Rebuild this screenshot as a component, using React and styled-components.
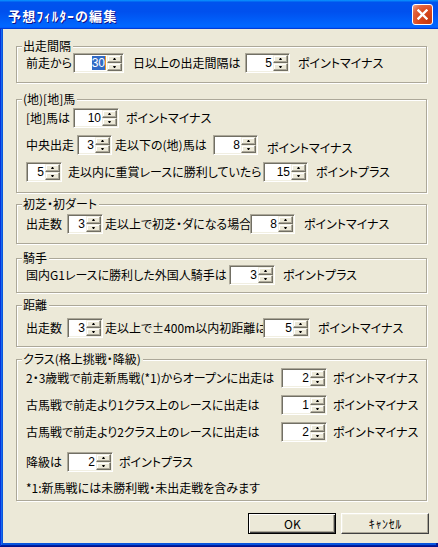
import React from 'react';
import styled, { createGlobalStyle } from 'styled-components';

const GlobalStyle = createGlobalStyle`
  html, body { margin: 0; padding: 0; background: #fff; }
  body { font-family: "Noto Sans CJK JP", "Noto Sans", sans-serif; }
`;

const Window = styled.div`
  width: 438px;
  height: 547px;
  display: flex;
  flex-direction: column;
`;

const TitleBar = styled.div`
  height: 29px;
  flex: none;
  display: flex;
  align-items: center;
  justify-content: space-between;
  padding: 0 5px 0 8px;
  box-sizing: border-box;
  background: linear-gradient(180deg, #0997ff, #0053ee 8%, #0050ee 40%, #06f 88%, #06f 93%, #005bff 95%, #003dd7 96%, #003dd7);
`;

const Title = styled.span`
  color: #fff;
  font-size: 13px;
  font-weight: bold;
  letter-spacing: 1.2px;
  text-shadow: 1px 1px #0f1089;
  padding-top: 1px;
`;

const CloseButton = styled.div`
  width: 21px;
  height: 21px;
  box-sizing: border-box;
  border: 1px solid #fff;
  border-radius: 3px;
  display: flex;
  align-items: center;
  justify-content: center;
  background: radial-gradient(circle at 85% 85%, #c43a12 0%, #d9471c 45%, #e2643e 75%, #f3a88f 100%);
`;

const Frame = styled.div`
  flex: 1;
  display: flex;
  padding: 0 3px 4px;
  background: #0855dd;
  box-shadow: inset -1px -1px #00138c, inset 1px 0 #0831d9, inset -2px -2px #001ea0, inset 2px 0 #166aee;
`;

const Client = styled.div`
  flex: 1;
  background: #ece9d8;
  padding: 17px 13px 0;
  display: flex;
  flex-direction: column;
  color: #000;
  font-size: 12px;
`;

const Group = styled.div`
  position: relative;
  margin-top: ${p => p.$mt || 0}px;
  padding: ${p => p.$pt}px 8px ${p => p.$pb}px 9px;
  border: 1px solid #aca899;
  box-shadow: 1px 1px 0 #fff, inset 1px 1px 0 #fff;
`;

const Legend = styled.span`
  position: absolute;
  top: -8px;
  left: 5px;
  padding: 0 2px 0 1px;
  line-height: 14px;
  background: #ece9d8;
  white-space: nowrap;
  font-feature-settings: "palt";
`;

const Row = styled.div`
  display: flex;
  align-items: center;
  height: 20px;
  margin-top: ${p => p.$gap || 0}px;
`;

const Text = styled.span`
  flex: none;
  width: ${p => (p.$w ? `${p.$w}px` : 'auto')};
  margin-left: ${p => p.$ml || 0}px;
  padding-top: ${p => (p.$low ? 5 : 0)}px;
  line-height: 14px;
  white-space: nowrap;
  font-feature-settings: "palt";
`;

const Note = styled.div`
  margin-top: 9px;
  line-height: 14px;
  white-space: nowrap;
  font-feature-settings: "palt";
`;

const SpinBox = styled.div`
  flex: none;
  width: ${p => p.$w}px;
  height: 20px;
  box-sizing: border-box;
  display: flex;
  padding: 1px;
  background: #fff;
  border: 1px solid;
  border-color: #aca899 #fff #fff #aca899;
  box-shadow: inset 1px 1px #716f64, inset -1px -1px #f1efe2;
`;

const SpinValue = styled.div`
  flex: 1;
  display: flex;
  justify-content: flex-end;
  align-items: center;
  padding-right: 1px;
  font-family: "Liberation Sans", "Noto Sans", sans-serif;
  font-size: 12px;
`;

const Selected = styled.span`
  background: #316ac5;
  color: #fff;
  line-height: 14px;
  border-right: 1px solid #e89a2c;
`;

const SpinButtons = styled.div`
  width: 15px;
  display: flex;
  flex-direction: column;
`;

const SpinButton = styled.div`
  flex: 1;
  display: flex;
  align-items: center;
  justify-content: center;
  background: #ece9d8;
  border: 1px solid;
  border-color: #f1efe2 #716f64 #716f64 #f1efe2;
  box-shadow: inset -1px -1px #aca899, inset 1px 1px #fff;
  &::after {
    content: "";
    width: 1px;
    border-left: 1px solid transparent;
    border-right: 1px solid transparent;
    ${p => (p.$down ? 'border-top: 2px solid #000;' : 'border-bottom: 2px solid #000;')}
  }
`;

const ButtonRow = styled.div`
  display: flex;
  justify-content: flex-end;
  gap: 5px;
  margin: 12px -2px 0 0;
`;

const PushButton = styled.button`
  width: 88px;
  height: 21px;
  padding: 0;
  font-family: "Noto Sans CJK JP", "Noto Sans", sans-serif;
  font-size: 12px;
  letter-spacing: ${p => (p.$wide ? '0.6px' : '0')};
  color: #000;
  background: #ece9d8;
  border: 1px solid;
  border-color: ${p => (p.$default ? '#000' : '#fff #404040 #404040 #fff')};
  box-shadow: ${p =>
    p.$default
      ? 'inset 1px 1px #fff, inset -1px -1px #404040, inset -2px -2px #aca899'
      : 'inset -1px -1px #aca899, inset 1px 1px #f1efe2'};
`;

const Spinner = ({ w, value, selected }) => (
  <SpinBox $w={w}>
    <SpinValue>{selected ? <Selected>{value}</Selected> : value}</SpinValue>
    <SpinButtons>
      <SpinButton />
      <SpinButton $down />
    </SpinButtons>
  </SpinBox>
);

const CloseIcon = () => (
  <svg width="11" height="11" viewBox="0 0 11 11">
    <path d="M1.5 1.5 L9.5 9.5 M9.5 1.5 L1.5 9.5" stroke="#fff" strokeWidth="2.4" strokeLinecap="square" />
  </svg>
);

export default function App() {
  return (
    <Window>
      <GlobalStyle />
      <TitleBar>
        <Title>予想ﾌｨﾙﾀｰの編集</Title>
        <CloseButton><CloseIcon /></CloseButton>
      </TitleBar>
      <Frame>
        <Client>
          <Group $pt={6} $pb={9}>
            <Legend>出走間隔</Legend>
            <Row>
              <Text $w={47}>前走から</Text>
              <Spinner w={51} value="30" selected />
              <Text $ml={9} $w={112}>日以上の出走間隔は</Text>
              <Spinner w={45} value="5" />
              <Text $ml={8}>ポイントマイナス</Text>
            </Row>
          </Group>

          <Group $mt={16} $pt={8} $pb={10}>
            <Legend>(地)[地]馬</Legend>
            <Row>
              <Text $w={47}>[地]馬は</Text>
              <Spinner w={46} value="10" />
              <Text $ml={7}>ポイントマイナス</Text>
            </Row>
            <Row $gap={7}>
              <Text $w={51}>中央出走</Text>
              <Spinner w={35} value="3" />
              <Text $ml={3} $w={98}>走以下の(地)馬は</Text>
              <Spinner w={45} value="8" />
              <Text $ml={9} $low>ポイントマイナス</Text>
            </Row>
            <Row $gap={7}>
              <Spinner w={36} value="5" />
              <Text $ml={6} $w={195}>走以内に重賞レースに勝利していたら</Text>
              <Spinner w={45} value="15" />
              <Text $ml={8}>ポイントプラス</Text>
            </Row>
          </Group>

          <Group $mt={11} $pt={9} $pb={9}>
            <Legend>初芝・初ダート</Legend>
            <Row>
              <Text $w={41}>出走数</Text>
              <Spinner w={36} value="3" />
              <Text $ml={2} $w={145}>走以上で初芝・ダになる場合</Text>
              <Spinner w={45} value="8" />
              <Text $ml={9}>ポイントマイナス</Text>
            </Row>
          </Group>

          <Group $mt={14} $pt={6} $pb={7}>
            <Legend>騎手</Legend>
            <Row>
              <Text $w={203}>国内G1レースに勝利した外国人騎手は</Text>
              <Spinner w={46} value="3" />
              <Text $ml={8}>ポイントプラス</Text>
            </Row>
          </Group>

          <Group $mt={12} $pt={12} $pb={8}>
            <Legend>距離</Legend>
            <Row>
              <Text $w={41}>出走数</Text>
              <Spinner w={36} value="3" />
              <Text $ml={2} $w={158}>走以上で±400m以内初距離は</Text>
              <Spinner w={47} value="5" />
              <Text $ml={8}>ポイントマイナス</Text>
            </Row>
          </Group>

          <Group $mt={12} $pt={8} $pb={5}>
            <Legend>クラス(格上挑戦・降級)</Legend>
            <Row>
              <Text $w={255}>2・3歳戦で前走新馬戦(*1)からオープンに出走は</Text>
              <Spinner w={46} value="2" />
              <Text $ml={6}>ポイントマイナス</Text>
            </Row>
            <Row $gap={7}>
              <Text $w={255}>古馬戦で前走より1クラス上のレースに出走は</Text>
              <Spinner w={46} value="1" />
              <Text $ml={6}>ポイントマイナス</Text>
            </Row>
            <Row $gap={7}>
              <Text $w={255}>古馬戦で前走より2クラス上のレースに出走は</Text>
              <Spinner w={46} value="2" />
              <Text $ml={6}>ポイントマイナス</Text>
            </Row>
            <Row $gap={10}>
              <Text $w={41}>降級は</Text>
              <Spinner w={46} value="2" />
              <Text $ml={6}>ポイントプラス</Text>
            </Row>
            <Note>*1:新馬戦には未勝利戦・未出走戦を含みます</Note>
          </Group>

          <ButtonRow>
            <PushButton $default>OK</PushButton>
            <PushButton $wide>ｷｬﾝｾﾙ</PushButton>
          </ButtonRow>
        </Client>
      </Frame>
    </Window>
  );
}
